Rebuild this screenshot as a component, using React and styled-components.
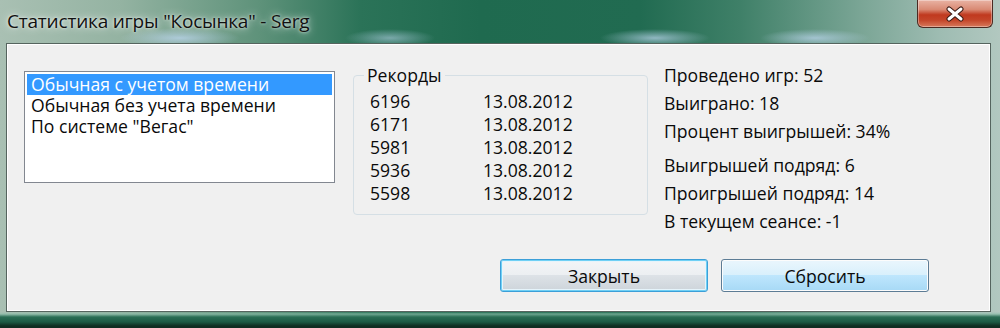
import React from "react";
import styled, { createGlobalStyle } from "styled-components";

const Global = createGlobalStyle`
  html, body { margin: 0; padding: 0; }
  body { width: 1000px; height: 328px; overflow: hidden; font-family: "Open Sans", "Noto Sans", sans-serif; }
`;

const Window = styled.div`
  width: 1000px;
  height: 328px;
  display: flex;
  flex-direction: column;
  box-sizing: border-box;
  background:
    radial-gradient(ellipse 60px 10px at 180px 38px, rgba(190,215,240,0.75), transparent),
    radial-gradient(ellipse 45px 9px at 390px 38px, rgba(190,215,240,0.55), transparent),
    radial-gradient(ellipse 55px 9px at 655px 38px, rgba(190,215,240,0.7), transparent),
    radial-gradient(ellipse 55px 9px at 815px 38px, rgba(190,215,240,0.7), transparent),
    linear-gradient(180deg, transparent 0px, transparent 312px, rgba(140,190,170,0.7) 314px, #2a6e55 317px, #1c5a44 322px, #0f2e22 326px),
    linear-gradient(90deg, #a9c0b3 0px, #94b3a2 120px, #5e927a 260px, #2b7358 360px, #1f6a4f 480px, #216b51 640px, #3f8068 740px, #7aa595 860px, #9ebcb2 940px, #b2c8c0 1000px);
`;

const TitleBar = styled.div`
  height: 43px;
  flex: none;
  display: flex;
  align-items: flex-start;
  justify-content: space-between;
  padding: 0 7px 0 7px;
  box-sizing: border-box;
`;

const Title = styled.div`
  font-family: "Open Sans", "Noto Sans", sans-serif;
  font-size: 19px;
  color: #111;
  margin-top: 8px;
  letter-spacing: -0.2px;
  text-shadow: 0 0 8px rgba(255,255,255,0.9), 0 0 3px rgba(255,255,255,0.8);
`;

const CloseButton = styled.div`
  width: 76px;
  height: 28px;
  box-sizing: border-box;
  border: 1px solid #4b2a22;
  border-top: none;
  border-radius: 0 0 6px 6px;
  background: linear-gradient(180deg, #e9b3a4 0%, #d98a74 35%, #c0391f 55%, #c4462a 75%, #d77a5c 100%);
  box-shadow: inset 0 0 0 1px rgba(255,255,255,0.35);
  display: flex;
  align-items: center;
  justify-content: center;
`;

const Client = styled.div`
  flex: 1;
  margin: 0 9px 16px 6px;
  background: #f0f0f0;
  border: 1px solid #55645e;
  box-shadow: inset 1px 1px 0 #ffffff, inset -1px -1px 0 #ffffff;
  display: flex;
  flex-direction: column;
  padding: 27px 61px 19px 17px;
  box-sizing: border-box;
  font-family: "Open Sans", "Noto Sans", sans-serif;
  font-size: 17.6px;
  color: #0a0a0a;
`;

const Content = styled.div`
  display: flex;
  align-items: flex-start;
  flex: 1;
`;

const ListBox = styled.div`
  width: 311px;
  height: 112px;
  box-sizing: border-box;
  background: #fff;
  border: 1px solid #828790;
  padding: 2px 2px;
  display: flex;
  flex-direction: column;
`;

const ListItem = styled.div`
  height: 21px;
  line-height: 21px;
  padding-left: 4px;
  background: ${(p) => (p.$selected ? "#3399ff" : "transparent")};
  color: ${(p) => (p.$selected ? "#fff" : "#0a0a0a")};
  white-space: nowrap;
`;

const Group = styled.fieldset`
  margin: -6px 0 0 18px;
  width: 295px;
  height: 150px;
  box-sizing: border-box;
  border: 1px solid #d5dfe5;
  border-radius: 4px;
  padding: 5px 0 0 16px;
  min-inline-size: 0;
`;

const Legend = styled.legend`
  padding: 0 3px;
  margin-left: -6px;
  font-size: 17.6px;
  line-height: 20px;
`;

const RecordRow = styled.div`
  display: grid;
  grid-template-columns: 113px 1fr;
  height: 23px;
  line-height: 23px;
`;

const Stats = styled.div`
  margin-left: 16px;
  margin-top: -10px;
  display: flex;
  flex-direction: column;
`;

const StatLine = styled.div`
  height: ${(p) => p.$h}px;
  line-height: 28px;
  white-space: nowrap;
`;

const Buttons = styled.div`
  display: flex;
  justify-content: flex-end;
  gap: 13px;
`;

const Button = styled.div`
  width: 208px;
  height: 33px;
  box-sizing: border-box;
  border-radius: 3px;
  border: 1px solid ${(p) => (p.$default ? "#3c9fd8" : "#707070")};
  background: linear-gradient(180deg, #f3f5f7 0%, #eceff2 48%, #dde2e7 50%, #cdd4da 100%);
  box-shadow: ${(p) =>
    p.$default
      ? "inset 0 0 0 1px #6fd0f5, inset 0 0 0 2px #e6f4fb"
      : "inset 0 0 0 1px #fcfcfc"};
  display: flex;
  align-items: center;
  justify-content: center;
  font-size: 17.6px;
  color: #0a0a0a;
`;

const ResetButton = styled(Button)`
  background: linear-gradient(180deg, #eaf6fd 0%, #d9f0fc 48%, #bee6fd 50%, #a7d9f5 100%);
  border-color: #5d7c95;
`;

const records = [
  ["6196", "13.08.2012"],
  ["6171", "13.08.2012"],
  ["5981", "13.08.2012"],
  ["5936", "13.08.2012"],
  ["5598", "13.08.2012"],
];

const stats = [
  ["Проведено игр: 52", 28],
  ["Выиграно: 18", 28],
  ["Процент выигрышей: 34%", 34],
  ["Выигрышей подряд: 6", 28],
  ["Проигрышей подряд: 14", 28],
  ["В текущем сеансе: -1", 28],
];

export default function App() {
  return (
    <>
      <Global />
      <Window>
        <TitleBar>
          <Title>Статистика игры "Косынка" - Serg</Title>
          <CloseButton>
            <svg width="22" height="16" viewBox="0 0 22 16">
              <path d="M5 3 L17 13 M17 3 L5 13" stroke="#3a1a14" strokeWidth="5" strokeLinecap="round" />
              <path d="M5 3 L17 13 M17 3 L5 13" stroke="#ffffff" strokeWidth="3" strokeLinecap="round" />
            </svg>
          </CloseButton>
        </TitleBar>
        <Client>
          <Content>
            <ListBox>
              <ListItem $selected>Обычная с учетом времени</ListItem>
              <ListItem>Обычная без учета времени</ListItem>
              <ListItem>По системе "Вегас"</ListItem>
            </ListBox>
            <Group>
              <Legend>Рекорды</Legend>
              {records.map(([n, d], i) => (
                <RecordRow key={i}>
                  <span>{n}</span>
                  <span>{d}</span>
                </RecordRow>
              ))}
            </Group>
            <Stats>
              {stats.map(([t, h], i) => (
                <StatLine key={i} $h={h}>{t}</StatLine>
              ))}
            </Stats>
          </Content>
          <Buttons>
            <Button $default>Закрыть</Button>
            <ResetButton>Сбросить</ResetButton>
          </Buttons>
        </Client>
      </Window>
    </>
  );
}
